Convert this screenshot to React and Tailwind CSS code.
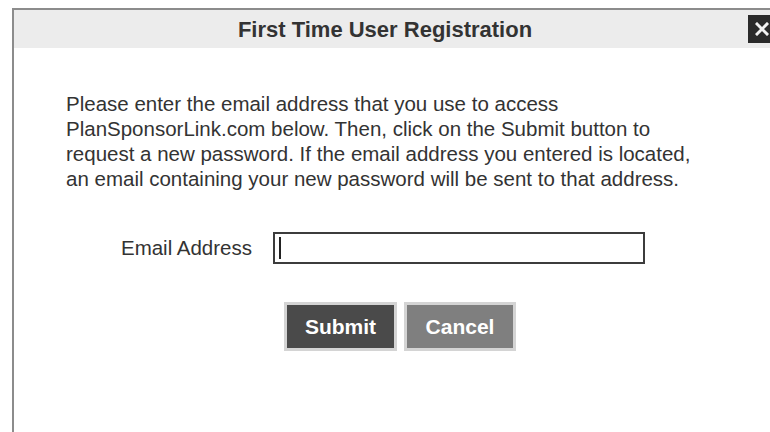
export default function App() {
  return (
    <div className="w-[770px] h-[432px] overflow-hidden bg-white pt-[8px] pl-[12px] font-['Liberation_Sans',Arial,sans-serif]">
      <div className="relative w-[800px] h-[440px] border-l-2 border-t-2 border-[#8c8c8c] bg-white">
        {/* title bar */}
        <div className="relative h-[38px] bg-[#ececec] flex items-center">
          <h1 className="w-[742px] text-center text-[22px] font-bold text-[#333]">
            First Time User Registration
          </h1>
          <button className="absolute left-[734px] top-[5px] w-[27px] h-[28px] bg-[#2b2b2b] flex items-center justify-center">
            <svg width="14" height="14" viewBox="0 0 14 14">
              <path d="M2 2L12 12M12 2L2 12" stroke="#f2f2f2" strokeWidth="3" strokeLinecap="square" />
            </svg>
          </button>
        </div>

        <p className="mt-[43px] ml-[52px] text-[20.5px] leading-[25px] text-[#333]">
          Please enter the email address that you use to access
          <br />
          PlanSponsorLink.com below. Then, click on the Submit button to
          <br />
          request a new password. If the email address you entered is located,
          <br />
          an email containing your new password will be sent to that address.
        </p>

        <div className="mt-[41px] flex items-center">
          <label className="w-[238px] text-right text-[20.5px] text-[#333]">Email Address</label>
          <div className="ml-[21px] w-[372px] h-[32px] border-2 border-[#3c3c3c] bg-white flex items-center pl-[4px]">
            <span className="w-[2px] h-[22px] bg-[#222]" />
          </div>
        </div>

        <div className="mt-[38px] flex gap-[7px] pl-[270px]">
          <button className="w-[113px] h-[49px] bg-[#4a4a4a] border-[3px] border-[#d4d4d4] text-white text-[21px] font-bold">
            Submit
          </button>
          <button className="w-[112px] h-[49px] bg-[#7f7f7f] border-[3px] border-[#d4d4d4] text-white text-[21px] font-bold">
            Cancel
          </button>
        </div>
      </div>
    </div>
  );
}
